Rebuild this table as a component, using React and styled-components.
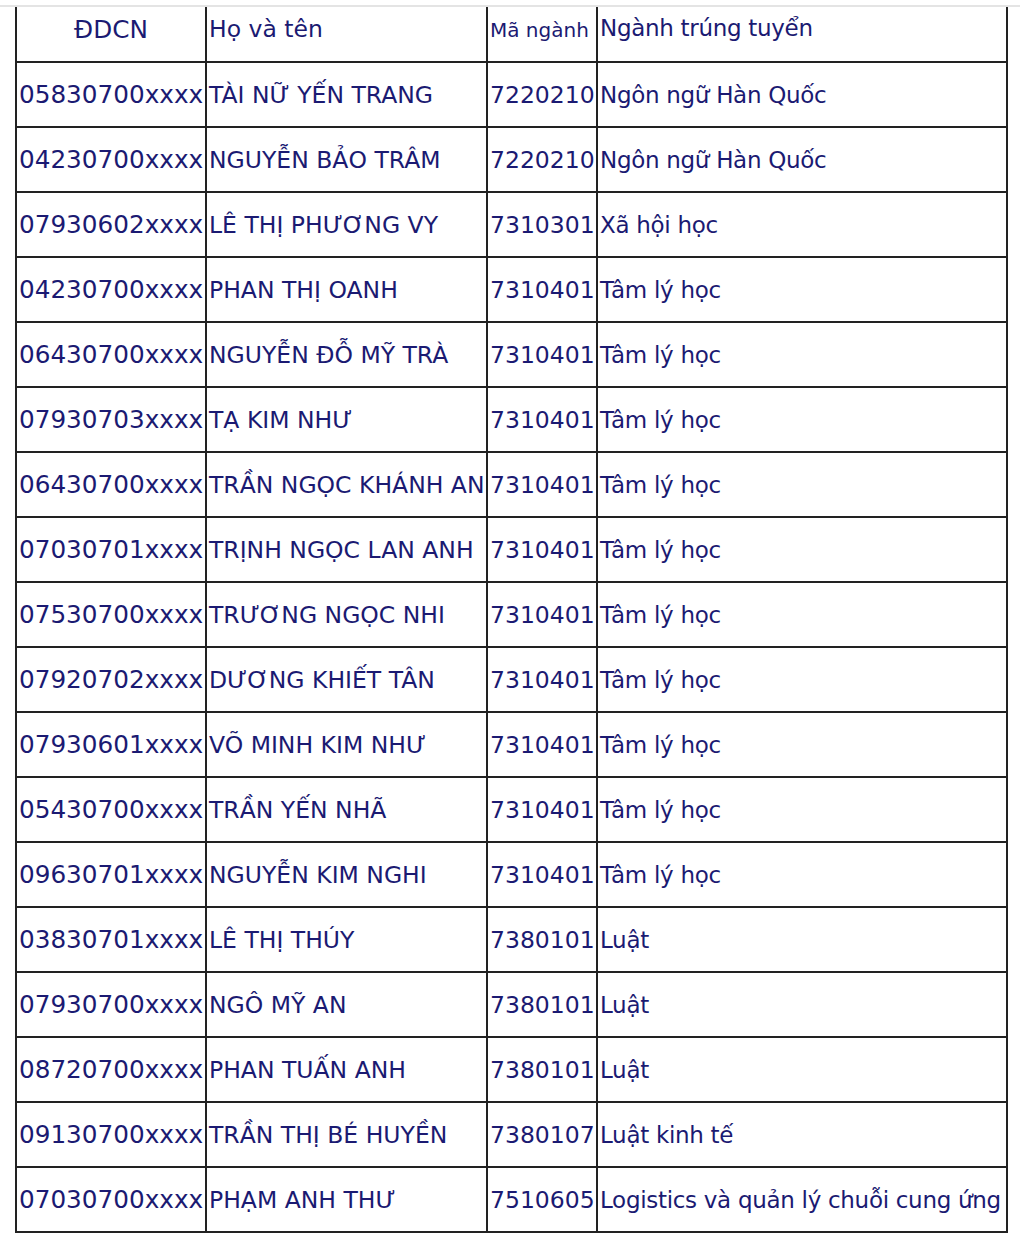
import React from 'react';
import styled, { createGlobalStyle } from 'styled-components';

const GlobalStyle = createGlobalStyle`
  body {
    margin: 0;
    background: #ffffff;
    font-family: "DejaVu Sans", "Liberation Sans", sans-serif;
  }
`;

const Page = styled.div`
  padding-top: 5px;
`;

const TopRule = styled.div`
  height: 2px;
  background: #e4e4e4;
`;

const TableWrap = styled.div`
  padding: 0 14px 0 15px;
`;

const ResultTable = styled.table`
  width: 991px;
  border-collapse: collapse;
  table-layout: fixed;
  color: #1b1a72;

  td, th {
    border: 2px solid #222;
    padding: 0 2px;
    white-space: nowrap;
    overflow: visible;
  }

  thead th {
    border-top: none;
    height: 43px;
    vertical-align: top;
    font-weight: normal;
  }

  tbody td {
    height: 63px;
    vertical-align: middle;
  }
`;

// font sizes per column, tuned to the widths in the scan
const sizes = {
  id: { size: '24.7px', spacing: '0' },
  name: { size: '23.5px', spacing: '0' },
  code: { size: '23.5px', spacing: '0' },
  small: { size: '20px', spacing: '0' },
  major: { size: '23px', spacing: '-0.3px' },
};

const HeadCell = styled.th`
  text-align: ${(p) => (p.$center ? 'center' : 'left')};
  font-size: ${(p) => sizes[p.$kind].size};
  letter-spacing: ${(p) => sizes[p.$kind].spacing};
  padding-top: ${(p) => (p.$kind === 'small' ? '11px' : '8px')} !important;
`;

const Cell = styled.td`
  text-align: ${(p) => (p.$center ? 'center' : 'left')};
  font-size: ${(p) => sizes[p.$kind].size};
  letter-spacing: ${(p) => sizes[p.$kind].spacing};
`;

const rows = [
  ['05830700xxxx', 'TÀI NỮ YẾN TRANG', '7220210', 'Ngôn ngữ Hàn Quốc'],
  ['04230700xxxx', 'NGUYỄN BẢO TRÂM', '7220210', 'Ngôn ngữ Hàn Quốc'],
  ['07930602xxxx', 'LÊ THỊ PHƯƠNG VY', '7310301', 'Xã hội học'],
  ['04230700xxxx', 'PHAN THỊ OANH', '7310401', 'Tâm lý học'],
  ['06430700xxxx', 'NGUYỄN ĐỖ MỸ TRÀ', '7310401', 'Tâm lý học'],
  ['07930703xxxx', 'TẠ KIM NHƯ', '7310401', 'Tâm lý học'],
  ['06430700xxxx', 'TRẦN NGỌC KHÁNH AN', '7310401', 'Tâm lý học'],
  ['07030701xxxx', 'TRỊNH NGỌC LAN ANH', '7310401', 'Tâm lý học'],
  ['07530700xxxx', 'TRƯƠNG NGỌC NHI', '7310401', 'Tâm lý học'],
  ['07920702xxxx', 'DƯƠNG KHIẾT TÂN', '7310401', 'Tâm lý học'],
  ['07930601xxxx', 'VÕ MINH KIM NHƯ', '7310401', 'Tâm lý học'],
  ['05430700xxxx', 'TRẦN YẾN NHÃ', '7310401', 'Tâm lý học'],
  ['09630701xxxx', 'NGUYỄN KIM NGHI', '7310401', 'Tâm lý học'],
  ['03830701xxxx', 'LÊ THỊ THÚY', '7380101', 'Luật'],
  ['07930700xxxx', 'NGÔ MỸ AN', '7380101', 'Luật'],
  ['08720700xxxx', 'PHAN TUẤN ANH', '7380101', 'Luật'],
  ['09130700xxxx', 'TRẦN THỊ BÉ HUYỀN', '7380107', 'Luật kinh tế'],
  ['07030700xxxx', 'PHẠM ANH THƯ', '7510605', 'Logistics và quản lý chuỗi cung ứng'],
];

const App = () => (
  <>
    <GlobalStyle />
    <Page>
      <TopRule />
      <TableWrap>
        <ResultTable>
          <colgroup>
            <col style={{ width: 190 }} />
            <col style={{ width: 281 }} />
            <col style={{ width: 110 }} />
            <col style={{ width: 410 }} />
          </colgroup>
          <thead>
            <tr>
              <HeadCell $center $kind="id">ĐDCN</HeadCell>
              <HeadCell $kind="name">Họ và tên</HeadCell>
              <HeadCell $kind="small">Mã ngành</HeadCell>
              <HeadCell $kind="major">Ngành trúng tuyển</HeadCell>
            </tr>
          </thead>
          <tbody>
            {rows.map((r, i) => (
              <tr key={i}>
                <Cell $center $kind="id">{r[0]}</Cell>
                <Cell $kind="name">{r[1]}</Cell>
                <Cell $center $kind="code">{r[2]}</Cell>
                <Cell $kind="major">{r[3]}</Cell>
              </tr>
            ))}
          </tbody>
        </ResultTable>
      </TableWrap>
    </Page>
  </>
);

export default App;
